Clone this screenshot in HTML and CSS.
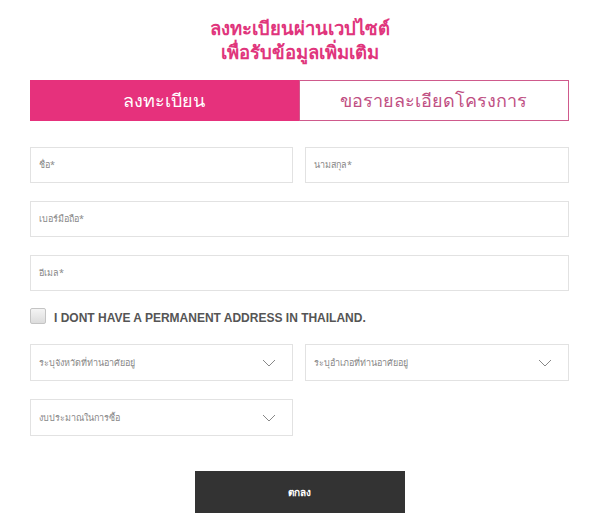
FILE: index.html
```html
<!DOCTYPE html>
<html lang="th">
<head>
<meta charset="utf-8">
<link rel="stylesheet" href="styles.css">
</head>
<body>
<div class="page">
  <h1 class="title"><span class="title-line">ลงทะเบียนผ่านเวปไซต์</span><span class="title-line">เพื่อรับข้อมูลเพิ่มเติม</span></h1>
  <div class="tabs">
    <div class="tab tab-active">ลงทะเบียน</div>
    <div class="tab tab-other">ขอรายละเอียดโครงการ</div>
  </div>
  <form class="form">
    <div class="row two">
      <div class="field">ชื่อ*</div>
      <div class="field">นามสกุล*</div>
    </div>
    <div class="row">
      <div class="field">เบอร์มือถือ*</div>
    </div>
    <div class="row">
      <div class="field">อีเมล*</div>
    </div>
    <label class="check">
      <span class="box"></span>
      <span class="check-text">I DONT HAVE A PERMANENT ADDRESS IN THAILAND.</span>
    </label>
    <div class="row two">
      <div class="field select"><span>ระบุจังหวัดที่ท่านอาศัยอยู่</span>
        <svg class="chev" width="14" height="8" viewBox="0 0 14 8"><path d="M1 1 L7 7 L13 1" fill="none" stroke="#888" stroke-width="1"/></svg></div>
      <div class="field select"><span>ระบุอำเภอที่ท่านอาศัยอยู่</span>
        <svg class="chev" width="14" height="8" viewBox="0 0 14 8"><path d="M1 1 L7 7 L13 1" fill="none" stroke="#888" stroke-width="1"/></svg></div>
    </div>
    <div class="row two">
      <div class="field select"><span>งบประมาณในการซื้อ</span>
        <svg class="chev" width="14" height="8" viewBox="0 0 14 8"><path d="M1 1 L7 7 L13 1" fill="none" stroke="#888" stroke-width="1"/></svg></div>
      <div></div>
    </div>
    <div class="submit-wrap">
      <div class="submit">ตกลง</div>
    </div>
  </form>
</div>
</body>
</html>
```
FILE: styles.css
```css
* { box-sizing: border-box; }
html, body { margin: 0; padding: 0; background: #fff; }
body { font-family: "Noto Sans", "DejaVu Sans", "Liberation Sans", sans-serif; }
.page { width: 600px; padding: 16px 31px 0 30px; }
.title {
  margin: 0;
  text-align: center;
  color: #e0357c;
  font-size: 18.5px;
  line-height: 24px;
  font-weight: 700;
  display: flex;
  flex-direction: column;
  gap: 0;
}
.title-line { display: block; height: 24px; }
.tabs {
  display: flex;
  margin-top: 16px;
  height: 41px;
}
.tab {
  flex: 1;
  display: flex;
  align-items: center;
  justify-content: center;
  font-size: 18px;
}
.tab-active { background: #e6317c; color: #fff; }
.tab-other { border: 1px solid #cf5a8c; color: #c04f83; background: #fff; }
.form { display: flex; flex-direction: column; margin-top: 26px; }
.row { display: grid; grid-template-columns: 1fr; column-gap: 12px; margin-bottom: 18px; }
.row.two { grid-template-columns: 263px 1fr; }
.field {
  height: 36px;
  border: 1px solid #e2e2e2;
  display: flex;
  align-items: center;
  padding: 0 8px;
  font-size: 9px;
  color: #888;
}
.select { height: 37px; justify-content: space-between; padding-right: 16px; }
.chev { display: block; }
.check { display: flex; align-items: center; gap: 8px; margin: -2px 0 20px 0; height: 17px; }
.box {
  width: 16px; height: 16px;
  border: 1px solid #c4c4c4;
  border-radius: 2px;
  background: linear-gradient(#f4f4f4, #dcdcdc);
}
.check-text { font-size: 12px; color: #555; font-family: "Liberation Sans", Arial, sans-serif; font-weight: 700; padding-top: 4px; }
.submit-wrap { display: flex; justify-content: center; margin-top: 17px; }
.submit {
  width: 210px; height: 42px;
  background: #333;
  color: #fff;
  font-size: 10px;
  font-weight: 700;
  display: flex; align-items: center; justify-content: center;
}
```
